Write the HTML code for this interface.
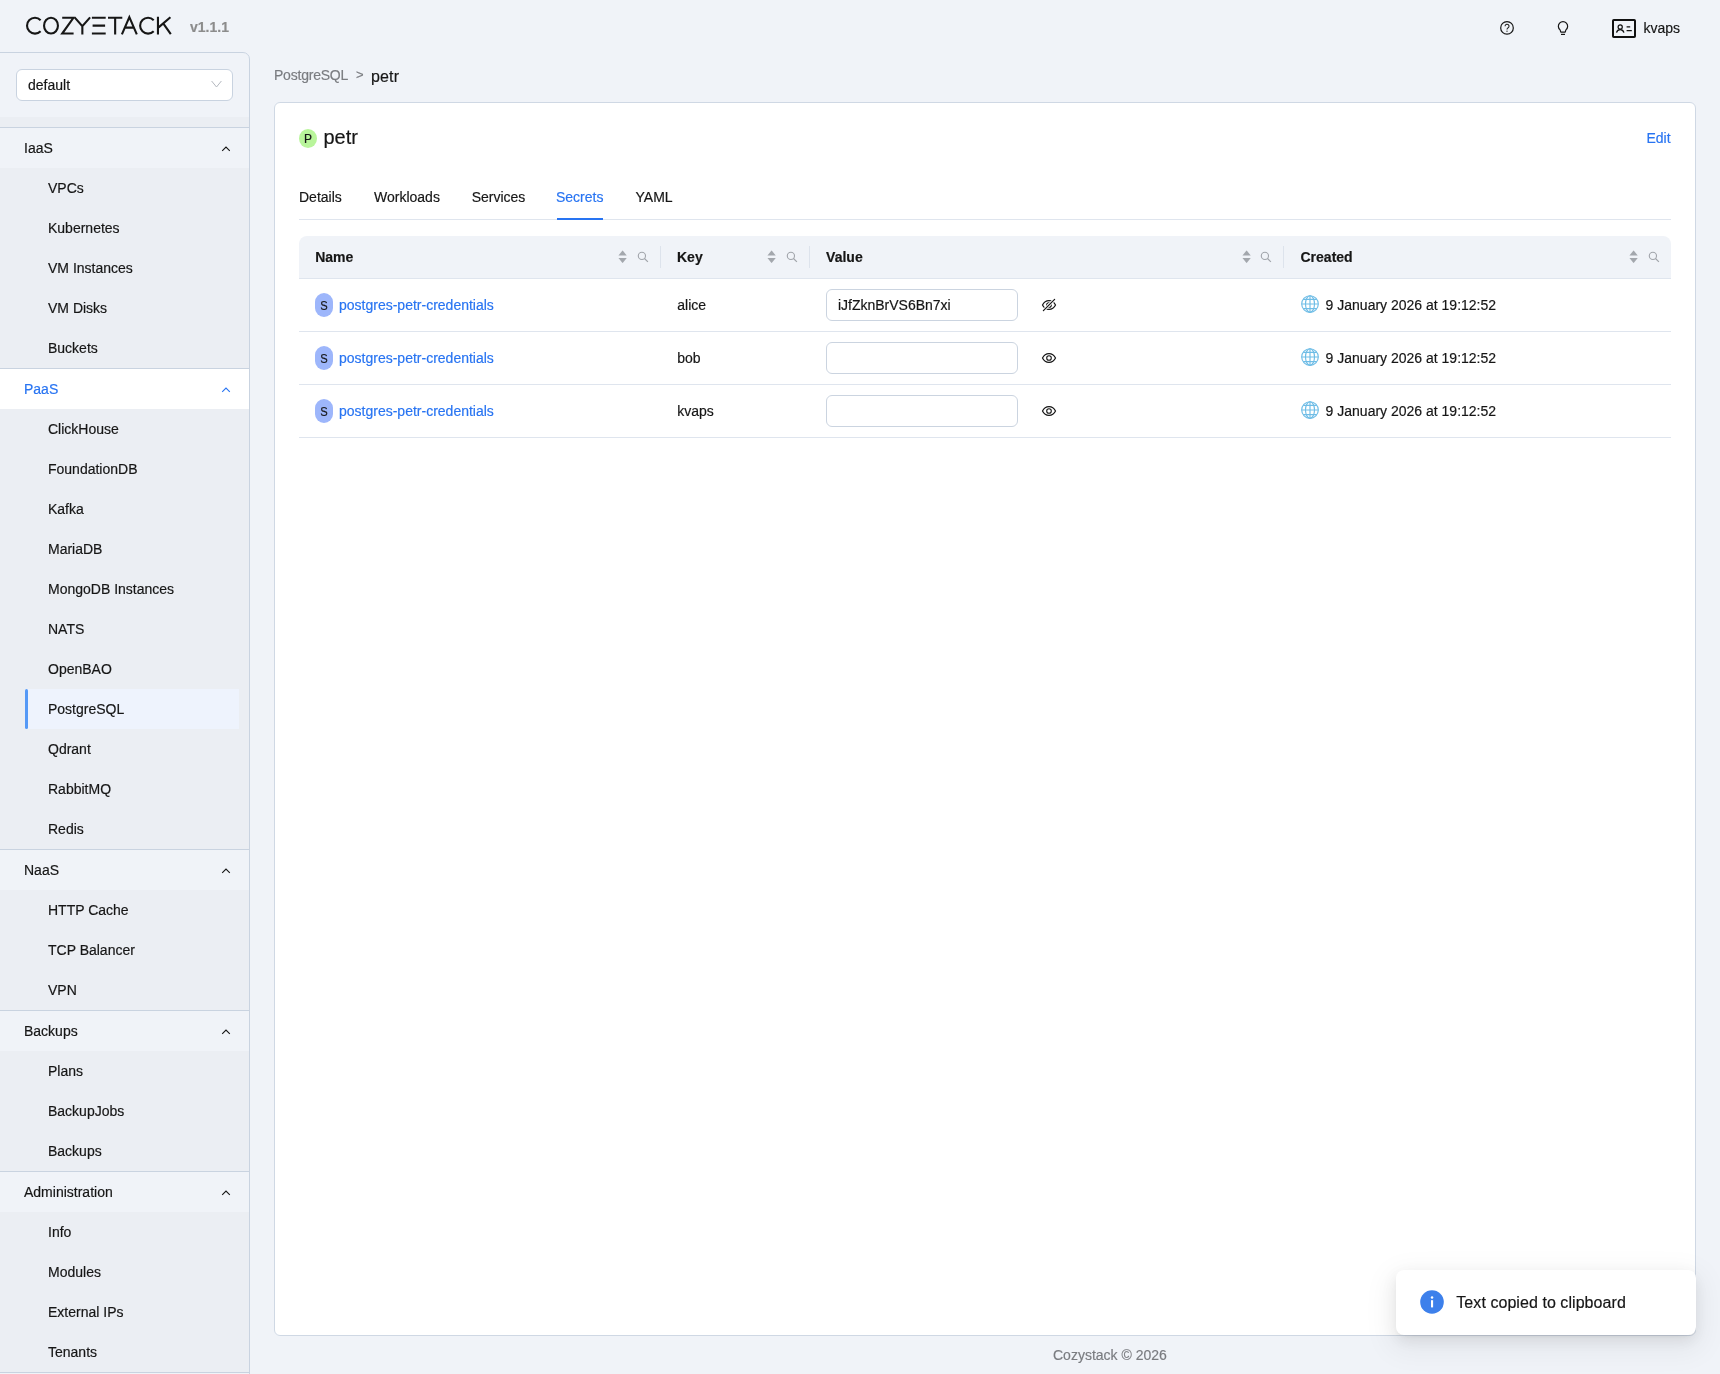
<!DOCTYPE html>
<html>
<head>
<meta charset="utf-8">
<style>
*{box-sizing:border-box;margin:0;padding:0}
html,body{width:1720px;height:1374px;overflow:hidden}
body{background:#f0f3f8;font-family:"Liberation Sans",sans-serif;font-size:14px;color:#161616;position:relative}
#wrap{position:absolute;left:0;top:0;width:1720px;height:1374px;will-change:transform;-webkit-text-stroke-width:0.18px}
.abs{position:absolute}
.t{position:absolute;white-space:nowrap;line-height:20px}
/* sidebar */
#sb{position:absolute;left:-1px;top:52px;width:251px;height:1330px;border:1px solid #c9d3e0;border-top-right-radius:7px;background:#f0f3f8;overflow:hidden}
.strip{position:absolute;left:0;right:0;background:#ebeef3}
.hd{position:absolute;left:0;right:0;height:40px;background:#f0f3f8}
.hd.act{background:#ffffff}
.hd .lbl{position:absolute;left:24px;top:10px;line-height:20px;font-size:14px;color:#161616}
.hd.act .lbl{color:#2874f2}
.hd svg{position:absolute;left:221px;top:16.8px}
.bl{position:absolute;left:0;right:0;height:1px;background:#c9d3e0}
.it{position:absolute;left:48px;line-height:20px;font-size:14px;color:#161616;white-space:nowrap}
#card{position:absolute;left:274px;top:102px;width:1422px;height:1234px;background:#fff;border:1px solid #cfd8e4;border-radius:6px}
</style>
</head>
<body>
<div id="wrap">
<!-- logo -->
<svg class="abs" style="left:0;top:0" width="240" height="50" viewBox="0 0 240 50">
<g fill="none" stroke="#161616" stroke-width="2.1">
<path d="M40.6 20.2 A7.9 7.9 0 1 0 40.6 31.2"/>
<ellipse cx="51" cy="25.65" rx="6.95" ry="7.9"/>
<path d="M62.2 17.75 H73.4 L62.2 33.55 H73.6"/>
<path d="M74.6 17.4 L82.35 26.2 L90.1 17.4 M82.35 26.2 V34.6"/>
<path d="M91.9 17.75 H105.7 M92.6 25.65 H105.1 M91.9 33.55 H105.7"/>
<path d="M108 17.75 H122.3 M115.15 17.75 V34.6"/>
<path d="M121.9 34.4 L129.35 17.2 L136.8 34.4 M124.4 27.6 H134.3"/>
<path d="M153.7 20.2 A7.9 7.9 0 1 0 153.7 31.2"/>
<path d="M157.95 16.7 V34.6 M170.4 17.2 L158.6 27.4 M163.2 23.4 L170.8 34.2"/>
</g>
</svg>
<div class="t" style="left:190px;top:17.2px;font-size:14px;font-weight:700;color:#8c8c8c">v1.1.1</div>

<!-- header right icons -->
<svg class="abs" style="left:1498px;top:19px" width="18" height="18" viewBox="0 0 18 18">
<circle cx="9" cy="8.9" r="6.3" fill="none" stroke="#161616" stroke-width="1.2"/>
<path d="M7.05 7.3 A2.0 1.95 0 1 1 9.9 8.9 C9.2 9.4 9 9.7 9 10.6" fill="none" stroke="#161616" stroke-width="1.05"/>
<circle cx="9" cy="12.2" r="0.62" fill="#161616"/>
</svg>
<svg class="abs" style="left:1554px;top:19px" width="18" height="18" viewBox="0 0 18 18">
<path d="M6.1 10.9 A4.65 4.65 0 1 1 11.9 10.9 L11.2 13.2 H6.8 Z" fill="none" stroke="#161616" stroke-width="1.2" stroke-linejoin="round"/>
<path d="M7 15.4 H11" stroke="#161616" stroke-width="1.2"/>
</svg>
<svg class="abs" style="left:1612px;top:19px" width="25" height="20" viewBox="0 0 25 20">
<rect x="1" y="1" width="22" height="17" rx="0.8" fill="none" stroke="#111" stroke-width="2"/>
<circle cx="8.2" cy="7.9" r="2.1" fill="none" stroke="#111" stroke-width="1.2"/>
<path d="M4.5 13.6 C5 11.6 6.4 10.6 8.2 10.6 C10 10.6 11.4 11.6 11.9 13.6" fill="none" stroke="#111" stroke-width="1.3"/>
<path d="M14.6 7.8 H18.2 M14.6 11.6 H19.8" stroke="#111" stroke-width="1.3"/>
</svg>
<div class="t" style="left:1643.5px;top:18px;font-size:14px;color:#161616">kvaps</div>

<!-- sidebar -->
<div id="sb">
<div class="abs" style="left:16px;top:16px;width:217px;height:32px;background:#fff;border:1px solid #c9d3e0;border-radius:6px"></div>
<div class="t" style="left:28px;top:22px;font-size:14px;color:#161616">default</div>
<svg class="abs" style="left:211px;top:27px" width="12" height="9" viewBox="0 0 12 9"><path d="M0.6 1 L5.5 7 L10.4 1" fill="none" stroke="#b4b8bf" stroke-width="1"/></svg>
<div class="strip" style="top:64px;height:10px"></div>
<div class="bl" style="top:74px"></div>
<div class="hd" style="top:75px"><span class="lbl">IaaS</span><svg width="10" height="7" viewBox="0 0 10 7"><path d="M1.2 5.8 L5 2 L8.8 5.8" fill="none" stroke="#161616" stroke-width="1.1"/></svg></div>
<div class="strip" style="top:115px;height:200px"></div>
<div class="it" style="top:125px">VPCs</div>
<div class="it" style="top:165px">Kubernetes</div>
<div class="it" style="top:205px">VM Instances</div>
<div class="it" style="top:245px">VM Disks</div>
<div class="it" style="top:285px">Buckets</div>
<div class="bl" style="top:315px"></div>
<div class="hd act" style="top:316px"><span class="lbl">PaaS</span><svg width="10" height="7" viewBox="0 0 10 7"><path d="M1.2 5.8 L5 2 L8.8 5.8" fill="none" stroke="#2874f2" stroke-width="1.1"/></svg></div>
<div class="strip" style="top:356px;height:440px"></div>
<div class="it" style="top:366px">ClickHouse</div>
<div class="it" style="top:406px">FoundationDB</div>
<div class="it" style="top:446px">Kafka</div>
<div class="it" style="top:486px">MariaDB</div>
<div class="it" style="top:526px">MongoDB Instances</div>
<div class="it" style="top:566px">NATS</div>
<div class="it" style="top:606px">OpenBAO</div>
<div class="abs" style="left:25px;top:636px;width:214px;height:40px;background:#eef3fd"></div>
<div class="abs" style="left:25px;top:636px;width:3px;height:40px;background:#5599f6;border-radius:2px"></div>
<div class="it" style="top:646px">PostgreSQL</div>
<div class="it" style="top:686px">Qdrant</div>
<div class="it" style="top:726px">RabbitMQ</div>
<div class="it" style="top:766px">Redis</div>
<div class="bl" style="top:796px"></div>
<div class="hd" style="top:797px"><span class="lbl">NaaS</span><svg width="10" height="7" viewBox="0 0 10 7"><path d="M1.2 5.8 L5 2 L8.8 5.8" fill="none" stroke="#161616" stroke-width="1.1"/></svg></div>
<div class="strip" style="top:837px;height:120px"></div>
<div class="it" style="top:847px">HTTP Cache</div>
<div class="it" style="top:887px">TCP Balancer</div>
<div class="it" style="top:927px">VPN</div>
<div class="bl" style="top:957px"></div>
<div class="hd" style="top:958px"><span class="lbl">Backups</span><svg width="10" height="7" viewBox="0 0 10 7"><path d="M1.2 5.8 L5 2 L8.8 5.8" fill="none" stroke="#161616" stroke-width="1.1"/></svg></div>
<div class="strip" style="top:998px;height:120px"></div>
<div class="it" style="top:1008px">Plans</div>
<div class="it" style="top:1048px">BackupJobs</div>
<div class="it" style="top:1088px">Backups</div>
<div class="bl" style="top:1118px"></div>
<div class="hd" style="top:1119px"><span class="lbl">Administration</span><svg width="10" height="7" viewBox="0 0 10 7"><path d="M1.2 5.8 L5 2 L8.8 5.8" fill="none" stroke="#161616" stroke-width="1.1"/></svg></div>
<div class="strip" style="top:1159px;height:160px"></div>
<div class="it" style="top:1169px">Info</div>
<div class="it" style="top:1209px">Modules</div>
<div class="it" style="top:1249px">External IPs</div>
<div class="it" style="top:1289px">Tenants</div>
<div class="bl" style="top:1319px"></div>
</div>

<!-- breadcrumb -->
<div class="t" style="left:274px;top:65.4px;font-size:14px;letter-spacing:-0.22px;color:#7a7c80">PostgreSQL</div>
<div class="t" style="left:356px;top:65.4px;font-size:13px;color:#7a7c80">&gt;</div>
<div class="t" style="left:371px;top:66.8px;font-size:16px;letter-spacing:0.15px;color:#161616">petr</div>

<div id="card"></div>
<div class="abs" style="left:299px;top:128.8px;width:18.2px;height:19.2px;border-radius:50%;background:#b9f59b"></div>
<div class="t" style="left:299px;top:129.4px;width:18.2px;text-align:center;font-size:12px;color:#161616">P</div>
<div class="t" style="left:323.5px;top:124.8px;line-height:24px;font-size:20px;color:#161616">petr</div>
<div class="t" style="left:1646.4px;top:128.4px;font-size:14px;color:#2874f2">Edit</div>
<div class="t" style="left:299px;top:187.4px;font-size:14px;color:#161616">Details</div>
<div class="t" style="left:374px;top:187.4px;font-size:14px;color:#161616">Workloads</div>
<div class="t" style="left:471.7px;top:187.4px;font-size:14px;color:#161616">Services</div>
<div class="t" style="left:556px;top:187.4px;font-size:14px;color:#2874f2">Secrets</div>
<div class="t" style="left:635.5px;top:187.4px;font-size:14px;color:#161616">YAML</div>
<div class="abs" style="left:299px;top:218.5px;width:1372px;height:1px;background:#dfe5ee"></div>
<div class="abs" style="left:556.8px;top:218px;width:46.3px;height:2px;background:#2874f2"></div>
<div class="abs" style="left:299px;top:236px;width:1372px;height:43px;background:#f0f3f8;border-radius:8px 8px 0 0;border-bottom:1px solid #dfe5ee"></div>
<div class="t" style="left:315.2px;top:246.6px;font-size:14px;font-weight:700;color:#161616">Name</div>
<svg class="abs" style="left:618.4px;top:250px" width="9" height="14" viewBox="0 0 9 14"><path d="M0.45 5.4 L4.3 0.7 Q4.6 0.4 4.9 0.7 L8.75 5.4 Z M0.45 8.1 L8.75 8.1 L4.9 12.8 Q4.6 13.1 4.3 12.8 Z" fill="#a3a7ad"/></svg>
<svg class="abs" style="left:637.1999999999999px;top:251px" width="12" height="12" viewBox="0 0 12 12"><circle cx="4.9" cy="4.9" r="3.6" fill="none" stroke="#a0a4aa" stroke-width="1.1"/><path d="M7.5 7.5 L10.9 10.9" stroke="#a0a4aa" stroke-width="1.15"/></svg>
<div class="abs" style="left:660.0px;top:246px;width:1px;height:22px;background:#dde3ec"></div>
<div class="t" style="left:677px;top:246.6px;font-size:14px;font-weight:700;color:#161616">Key</div>
<svg class="abs" style="left:767.4px;top:250px" width="9" height="14" viewBox="0 0 9 14"><path d="M0.45 5.4 L4.3 0.7 Q4.6 0.4 4.9 0.7 L8.75 5.4 Z M0.45 8.1 L8.75 8.1 L4.9 12.8 Q4.6 13.1 4.3 12.8 Z" fill="#a3a7ad"/></svg>
<svg class="abs" style="left:786.1999999999999px;top:251px" width="12" height="12" viewBox="0 0 12 12"><circle cx="4.9" cy="4.9" r="3.6" fill="none" stroke="#a0a4aa" stroke-width="1.1"/><path d="M7.5 7.5 L10.9 10.9" stroke="#a0a4aa" stroke-width="1.15"/></svg>
<div class="abs" style="left:808.8px;top:246px;width:1px;height:22px;background:#dde3ec"></div>
<div class="t" style="left:826.1px;top:246.6px;font-size:14px;font-weight:700;color:#161616">Value</div>
<svg class="abs" style="left:1241.6px;top:250px" width="9" height="14" viewBox="0 0 9 14"><path d="M0.45 5.4 L4.3 0.7 Q4.6 0.4 4.9 0.7 L8.75 5.4 Z M0.45 8.1 L8.75 8.1 L4.9 12.8 Q4.6 13.1 4.3 12.8 Z" fill="#a3a7ad"/></svg>
<svg class="abs" style="left:1260.3999999999999px;top:251px" width="12" height="12" viewBox="0 0 12 12"><circle cx="4.9" cy="4.9" r="3.6" fill="none" stroke="#a0a4aa" stroke-width="1.1"/><path d="M7.5 7.5 L10.9 10.9" stroke="#a0a4aa" stroke-width="1.15"/></svg>
<div class="abs" style="left:1282.9px;top:246px;width:1px;height:22px;background:#dde3ec"></div>
<div class="t" style="left:1300.5px;top:246.6px;font-size:14px;font-weight:700;color:#161616">Created</div>
<svg class="abs" style="left:1628.8px;top:250px" width="9" height="14" viewBox="0 0 9 14"><path d="M0.45 5.4 L4.3 0.7 Q4.6 0.4 4.9 0.7 L8.75 5.4 Z M0.45 8.1 L8.75 8.1 L4.9 12.8 Q4.6 13.1 4.3 12.8 Z" fill="#a3a7ad"/></svg>
<svg class="abs" style="left:1647.6px;top:251px" width="12" height="12" viewBox="0 0 12 12"><circle cx="4.9" cy="4.9" r="3.6" fill="none" stroke="#a0a4aa" stroke-width="1.1"/><path d="M7.5 7.5 L10.9 10.9" stroke="#a0a4aa" stroke-width="1.15"/></svg>
<div class="abs" style="left:299px;top:331px;width:1372px;height:1px;background:#dfe5ee"></div>
<div class="abs" style="left:315px;top:293px;width:18px;height:24px;border-radius:9px;background:#9db6fb"></div>
<div class="t" style="left:315px;top:295.8px;width:18px;text-align:center;font-size:13px;color:#161616;transform:scaleX(0.86)">S</div>
<div class="t" style="left:339px;top:295px;font-size:14px;color:#2874f2">postgres-petr-credentials</div>
<div class="t" style="left:677.3px;top:295px;font-size:14px;color:#161616">alice</div>
<div class="abs" style="left:826px;top:289px;width:192px;height:32px;border:1px solid #cbd4e0;border-radius:6px;background:#fff"></div>
<div class="t" style="left:837.9px;top:295px;font-size:14px;color:#161616">iJfZknBrVS6Bn7xi</div>
<svg class="abs" style="left:1040px;top:296px" width="18" height="18" viewBox="0 0 18 18"><path d="M2.5 9 C4.5 4.8 6.8 4.6 9 4.6 C11.2 4.6 13.5 4.8 15.5 9 C13.5 13.2 11.2 13.4 9 13.4 C6.8 13.4 4.5 13.2 2.5 9 Z" fill="none" stroke="#161616" stroke-width="1.2"/><circle cx="9" cy="9" r="2.3" fill="none" stroke="#161616" stroke-width="1.1"/><path d="M3.2 14.8 L14.6 3.4" stroke="#fff" stroke-width="3"/><path d="M3.4 14.6 L14.6 3.4" stroke="#161616" stroke-width="1.25" stroke-linecap="round"/></svg>
<svg class="abs" style="left:1300px;top:294.4px" width="20" height="20" viewBox="0 0 20 20"><g fill="none" stroke="#6fbde6" stroke-width="1.15"><circle cx="10" cy="10" r="8.3"/><ellipse cx="10" cy="10" rx="4.5" ry="8.3"/><path d="M10 1.7 V18.3 M1.7 10 H18.3 M3.2 5.3 H16.8 M3.2 14.6 H16.8"/></g></svg>
<div class="t" style="left:1325.6px;top:295px;font-size:14px;color:#161616">9 January 2026 at 19:12:52</div>
<div class="abs" style="left:299px;top:384px;width:1372px;height:1px;background:#dfe5ee"></div>
<div class="abs" style="left:315px;top:346px;width:18px;height:24px;border-radius:9px;background:#9db6fb"></div>
<div class="t" style="left:315px;top:348.8px;width:18px;text-align:center;font-size:13px;color:#161616;transform:scaleX(0.86)">S</div>
<div class="t" style="left:339px;top:348px;font-size:14px;color:#2874f2">postgres-petr-credentials</div>
<div class="t" style="left:677.3px;top:348px;font-size:14px;color:#161616">bob</div>
<div class="abs" style="left:826px;top:342px;width:192px;height:32px;border:1px solid #cbd4e0;border-radius:6px;background:#fff"></div>
<svg class="abs" style="left:1040px;top:349px" width="18" height="18" viewBox="0 0 18 18"><path d="M2.5 9 C4.5 4.8 6.8 4.6 9 4.6 C11.2 4.6 13.5 4.8 15.5 9 C13.5 13.2 11.2 13.4 9 13.4 C6.8 13.4 4.5 13.2 2.5 9 Z" fill="none" stroke="#161616" stroke-width="1.2"/><circle cx="9" cy="9" r="2.3" fill="none" stroke="#161616" stroke-width="1.1"/></svg>
<svg class="abs" style="left:1300px;top:347.4px" width="20" height="20" viewBox="0 0 20 20"><g fill="none" stroke="#6fbde6" stroke-width="1.15"><circle cx="10" cy="10" r="8.3"/><ellipse cx="10" cy="10" rx="4.5" ry="8.3"/><path d="M10 1.7 V18.3 M1.7 10 H18.3 M3.2 5.3 H16.8 M3.2 14.6 H16.8"/></g></svg>
<div class="t" style="left:1325.6px;top:348px;font-size:14px;color:#161616">9 January 2026 at 19:12:52</div>
<div class="abs" style="left:299px;top:437px;width:1372px;height:1px;background:#dfe5ee"></div>
<div class="abs" style="left:315px;top:399px;width:18px;height:24px;border-radius:9px;background:#9db6fb"></div>
<div class="t" style="left:315px;top:401.8px;width:18px;text-align:center;font-size:13px;color:#161616;transform:scaleX(0.86)">S</div>
<div class="t" style="left:339px;top:401px;font-size:14px;color:#2874f2">postgres-petr-credentials</div>
<div class="t" style="left:677.3px;top:401px;font-size:14px;color:#161616">kvaps</div>
<div class="abs" style="left:826px;top:395px;width:192px;height:32px;border:1px solid #cbd4e0;border-radius:6px;background:#fff"></div>
<svg class="abs" style="left:1040px;top:402px" width="18" height="18" viewBox="0 0 18 18"><path d="M2.5 9 C4.5 4.8 6.8 4.6 9 4.6 C11.2 4.6 13.5 4.8 15.5 9 C13.5 13.2 11.2 13.4 9 13.4 C6.8 13.4 4.5 13.2 2.5 9 Z" fill="none" stroke="#161616" stroke-width="1.2"/><circle cx="9" cy="9" r="2.3" fill="none" stroke="#161616" stroke-width="1.1"/></svg>
<svg class="abs" style="left:1300px;top:400.4px" width="20" height="20" viewBox="0 0 20 20"><g fill="none" stroke="#6fbde6" stroke-width="1.15"><circle cx="10" cy="10" r="8.3"/><ellipse cx="10" cy="10" rx="4.5" ry="8.3"/><path d="M10 1.7 V18.3 M1.7 10 H18.3 M3.2 5.3 H16.8 M3.2 14.6 H16.8"/></g></svg>
<div class="t" style="left:1325.6px;top:401px;font-size:14px;color:#161616">9 January 2026 at 19:12:52</div>
<div class="abs" style="left:1396px;top:1270px;width:300px;height:65px;background:#fff;border-radius:8px;box-shadow:0 6px 16px 0 rgba(0,0,0,0.08),0 3px 6px -4px rgba(0,0,0,0.12),0 9px 28px 8px rgba(0,0,0,0.05)"></div>
<svg class="abs" style="left:1420px;top:1290px" width="24" height="24" viewBox="0 0 24 24"><circle cx="12" cy="12" r="11.8" fill="#3d80eb"/><rect x="11" y="10.2" width="2.1" height="7.2" fill="#fff"/><circle cx="12.05" cy="7.4" r="1.25" fill="#fff"/></svg>
<div class="t" style="left:1456.3px;top:1292.8px;font-size:16px;letter-spacing:0.06px;color:#161616">Text copied to clipboard</div>

<div class="t" style="left:1053px;top:1345px;font-size:14px;color:#7a7c80">Cozystack © 2026</div>
</div>
</body>
</html>
